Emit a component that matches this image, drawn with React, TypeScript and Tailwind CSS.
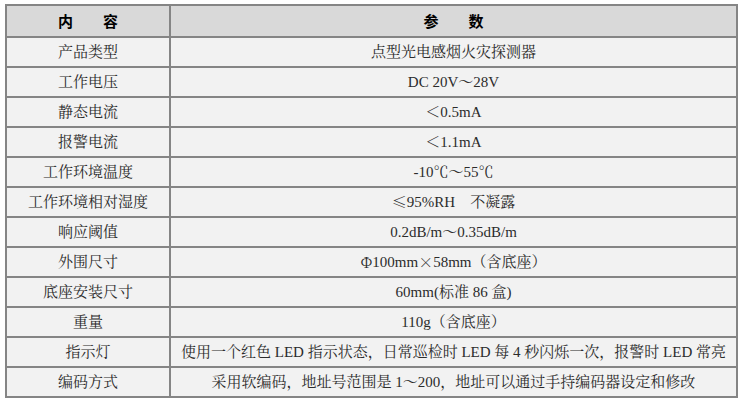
import React from "react";

interface SpecRow {
  label: string;
  value: string;
}

const specs: SpecRow[] = [
  { label: "产品类型", value: "点型光电感烟火灾探测器" },
  { label: "工作电压", value: "DC 20V～28V" },
  { label: "静态电流", value: "＜0.5mA" },
  { label: "报警电流", value: "＜1.1mA" },
  { label: "工作环境温度", value: "-10℃～55℃" },
  { label: "工作环境相对湿度", value: "≤95%RH　不凝露" },
  { label: "响应阈值", value: "0.2dB/m～0.35dB/m" },
  { label: "外围尺寸", value: "Φ100mm×58mm（含底座）" },
  { label: "底座安装尺寸", value: "60mm(标准 86 盒)" },
  { label: "重量", value: "110g（含底座）" },
  {
    label: "指示灯",
    value: "使用一个红色 LED 指示状态，日常巡检时 LED 每 4 秒闪烁一次，报警时 LED 常亮",
  },
  {
    label: "编码方式",
    value: "采用软编码，地址号范围是 1～200，地址可以通过手持编码器设定和修改",
  },
];

const font = {
  fontFamily:
    '"Liberation Serif", "Noto Serif CJK SC", "Noto Sans CJK SC", serif',
};

const headFont = { fontFamily: '"Noto Sans CJK SC", sans-serif' };
const cjkFont = { fontFamily: '"Noto Serif CJK SC", serif' };

// symbols like ≤ × Φ should come from the CJK font (full width, like the original)
const renderValue = (text: string) =>
  text.split(/([≤×Φ])/).map((part, i) =>
    /^[≤×Φ]$/.test(part) ? (
      <span key={i} style={cjkFont}>
        {part}
      </span>
    ) : (
      <React.Fragment key={i}>{part}</React.Fragment>
    )
  );

const App = () => {
  return (
    <div className="w-[740px] h-[403px] bg-white pt-[4px] pl-[5px]" style={font}>
      <div className="w-[733px] border-2 border-[#858585] text-[15px] text-[#2b2b2b]">
        <div className="flex h-[30px] bg-[#d9d9d9]">
          <div
            className="w-[164px] border-r-2 border-[#858585] flex items-center justify-center font-bold text-black"
            style={headFont}
          >
            内　　容
          </div>
          <div
            className="flex-1 flex items-center justify-center font-bold text-black"
            style={headFont}
          >
            参　　数
          </div>
        </div>
        {specs.map((row) => (
          <div
            key={row.label}
            className="flex h-[30px] bg-[#f2f2f2] border-t-2 border-[#858585]"
          >
            <div className="w-[164px] border-r-2 border-[#858585] flex items-center justify-center whitespace-nowrap">
              {row.label}
            </div>
            <div className="flex-1 flex items-center justify-center whitespace-nowrap">
              {renderValue(row.value)}
            </div>
          </div>
        ))}
      </div>
    </div>
  );
};

export default App;
